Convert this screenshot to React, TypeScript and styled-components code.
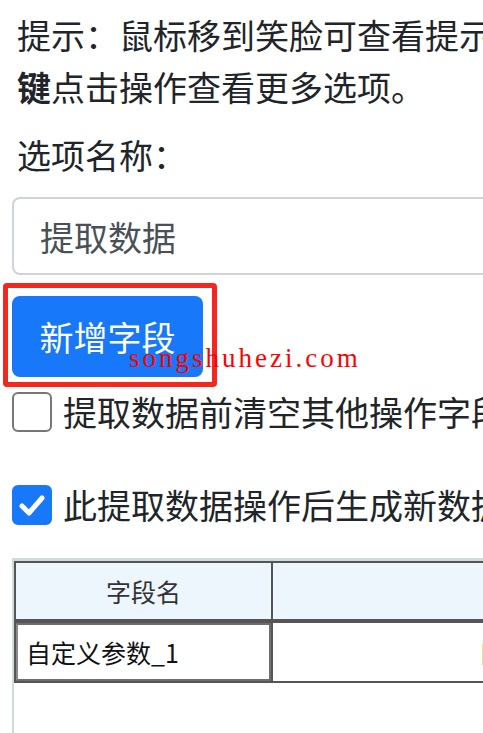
import React from 'react'
import styled, { createGlobalStyle } from 'styled-components'

const GlobalStyle = createGlobalStyle`
  html, body {
    margin: 0;
    padding: 0;
    background: #fff;
    overflow: hidden;
  }
  body {
    font-family: "Noto Sans CJK SC", "Noto Sans", sans-serif;
    color: #212529;
  }
`

const Page = styled.div`
  position: relative;
  width: 483px;
  height: 733px;
  overflow: hidden;
  padding: 9px 0 0 12px;
  box-sizing: border-box;
`

const Hint = styled.p`
  margin: 0 0 16px 5px;
  width: 600px;
  font-size: 34px;
  line-height: 52px;
  white-space: pre;
  b {
    font-weight: 700;
  }
`

const Label = styled.div`
  margin: 0 0 16px 5px;
  font-size: 34px;
  line-height: 52px;
`

const TextInput = styled.div`
  box-sizing: border-box;
  width: 520px;
  height: 78px;
  border: 2px solid #ced4da;
  border-radius: 8px;
  padding: 0 26px;
  display: flex;
  align-items: center;
  font-size: 34px;
  color: #495057;
`

const ButtonWrap = styled.div`
  position: relative;
  display: inline-block;
  margin-top: 21px;
  &::before {
    content: '';
    position: absolute;
    top: -13px;
    left: -9px;
    right: -14px;
    bottom: -10px;
    border: 5px solid #f5261b;
    border-radius: 4px;
  }
`

const PrimaryButton = styled.button`
  display: block;
  box-sizing: border-box;
  width: 191px;
  height: 81px;
  border: none;
  border-radius: 8px;
  background: #1778f9;
  color: #fff;
  font-family: inherit;
  font-size: 34px;
  padding: 0;
`

const Watermark = styled.span`
  position: absolute;
  left: 129px;
  top: 338px;
  font-family: "Liberation Serif", serif;
  font-size: 27px;
  letter-spacing: 3px;
  color: #ff0000;
  line-height: 40px;
  pointer-events: none;
`

const CheckRow = styled.label<{ $gap: number }>`
  display: flex;
  align-items: center;
  gap: 11px;
  margin-top: ${({ $gap }) => $gap}px;
  font-size: 34px;
  line-height: 51px;
  white-space: nowrap;
`

const Box = styled.span<{ $checked?: boolean }>`
  flex: none;
  box-sizing: border-box;
  width: 40px;
  height: 40px;
  border-radius: 6px;
  border: 2px solid ${({ $checked }) => ($checked ? '#1778f9' : '#767676')};
  background: ${({ $checked }) => ($checked ? '#1778f9' : '#fff')};
  display: flex;
  align-items: center;
  justify-content: center;
`

const TableFrame = styled.div`
  margin-top: 28px;
  border-top: 3px solid #cfdcdc;
  border-left: 2px solid #cfdcdc;
  height: 200px;
`

const Grid = styled.table`
  border-collapse: collapse;
  width: 1000px;
  table-layout: fixed;
  font-size: 25px;
`

const HeadCell = styled.th<{ $w?: number }>`
  width: ${({ $w }) => ($w ? `${$w}px` : 'auto')};
  height: 59px;
  box-sizing: border-box;
  background: #eef6fd;
  border: 2px solid #555;
  border-bottom: 4px solid #555;
  font-weight: 400;
  color: #333;
  text-align: center;
  padding: 0;
`

const BodyCell = styled.td`
  height: 60px;
  box-sizing: border-box;
  border: 2px solid #555;
  padding: 0;
  text-align: left;
  color: #111;
`

const CellInput = styled.div`
  box-sizing: border-box;
  height: 58px;
  border: 2px solid #6e6e6e;
  border-left-color: #8a8a8a;
  display: flex;
  align-items: center;
  padding-left: 8px;
`

const SideText = styled.div`
  padding-left: 206px;
`

function Check() {
  return (
    <svg width="28" height="28" viewBox="0 0 28 28">
      <path d="M4 15 L11 22 L24 7" fill="none" stroke="#fff" strokeWidth="5" strokeLinecap="round" strokeLinejoin="round" />
    </svg>
  )
}

export default function App() {
  return (
    <>
      <GlobalStyle />
      <Page>
        <Hint>
          提示：鼠标移到笑脸可查看提示信息，右
          {'\n'}
          <b>键</b>点击操作查看更多选项。
        </Hint>
        <Label>选项名称：</Label>
        <TextInput>提取数据</TextInput>
        <ButtonWrap>
          <PrimaryButton>新增字段</PrimaryButton>
        </ButtonWrap>
        <CheckRow $gap={9}>
          <Box />
          提取数据前清空其他操作字段
        </CheckRow>
        <CheckRow $gap={42}>
          <Box $checked>
            <Check />
          </Box>
          此提取数据操作后生成新数据
        </CheckRow>
        <TableFrame>
          <Grid>
            <thead>
              <tr>
                <HeadCell $w={257}>字段名</HeadCell>
                <HeadCell>字段值</HeadCell>
              </tr>
            </thead>
            <tbody>
              <tr>
                <BodyCell>
                  <CellInput>自定义参数_1</CellInput>
                </BodyCell>
                <BodyCell>
                  <SideText>目标值</SideText>
                </BodyCell>
              </tr>
            </tbody>
          </Grid>
        </TableFrame>
        <Watermark>songshuhezi.com</Watermark>
      </Page>
    </>
  )
}
